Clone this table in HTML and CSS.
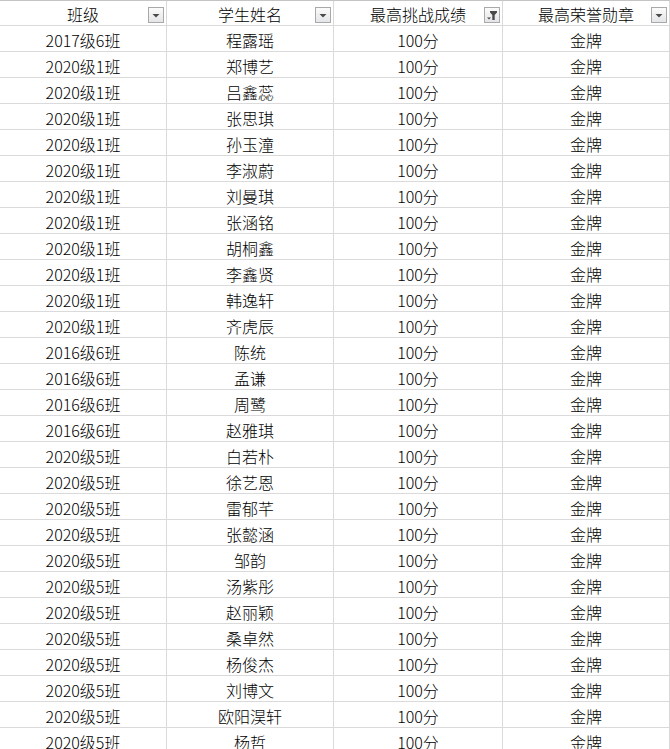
FILE: index.html
```html
<!DOCTYPE html>
<html lang="zh-CN">
<head>
<meta charset="utf-8">
<title>成绩表</title>
<link rel="stylesheet" href="styles.css">
</head>
<body>
<div class="sheet">
  <div class="cell head"><span class="label">班级</span><span class="fbtn"><svg width="14" height="14" viewBox="0 0 14 14"><path d="M3.5 6h7l-3.5 3.5z" fill="#4a4a4a"/></svg></span></div>
  <div class="cell head"><span class="label">学生姓名</span><span class="fbtn"><svg width="14" height="14" viewBox="0 0 14 14"><path d="M3.5 6h7l-3.5 3.5z" fill="#4a4a4a"/></svg></span></div>
  <div class="cell head"><span class="label">最高挑战成绩</span><span class="fbtn"><svg width="14" height="14" viewBox="0 0 14 14"><path d="M5 3h7v1.5l-2.3 2.5v5h-2.4v-5L5 4.5z" fill="#4a4a4a"/><path d="M2 9.5h4l-2 2z" fill="#4a4a4a"/></svg></span></div>
  <div class="cell head"><span class="label">最高荣誉勋章</span><span class="fbtn"><svg width="14" height="14" viewBox="0 0 14 14"><path d="M3.5 6h7l-3.5 3.5z" fill="#4a4a4a"/></svg></span></div>

  <div class="cell">2017级6班</div><div class="cell">程露瑶</div><div class="cell">100分</div><div class="cell">金牌</div>
  <div class="cell">2020级1班</div><div class="cell">郑博艺</div><div class="cell">100分</div><div class="cell">金牌</div>
  <div class="cell">2020级1班</div><div class="cell">吕鑫蕊</div><div class="cell">100分</div><div class="cell">金牌</div>
  <div class="cell">2020级1班</div><div class="cell">张思琪</div><div class="cell">100分</div><div class="cell">金牌</div>
  <div class="cell">2020级1班</div><div class="cell">孙玉潼</div><div class="cell">100分</div><div class="cell">金牌</div>
  <div class="cell">2020级1班</div><div class="cell">李淑蔚</div><div class="cell">100分</div><div class="cell">金牌</div>
  <div class="cell">2020级1班</div><div class="cell">刘曼琪</div><div class="cell">100分</div><div class="cell">金牌</div>
  <div class="cell">2020级1班</div><div class="cell">张涵铭</div><div class="cell">100分</div><div class="cell">金牌</div>
  <div class="cell">2020级1班</div><div class="cell">胡桐鑫</div><div class="cell">100分</div><div class="cell">金牌</div>
  <div class="cell">2020级1班</div><div class="cell">李鑫贤</div><div class="cell">100分</div><div class="cell">金牌</div>
  <div class="cell">2020级1班</div><div class="cell">韩逸轩</div><div class="cell">100分</div><div class="cell">金牌</div>
  <div class="cell">2020级1班</div><div class="cell">齐虎辰</div><div class="cell">100分</div><div class="cell">金牌</div>
  <div class="cell">2016级6班</div><div class="cell">陈统</div><div class="cell">100分</div><div class="cell">金牌</div>
  <div class="cell">2016级6班</div><div class="cell">孟谦</div><div class="cell">100分</div><div class="cell">金牌</div>
  <div class="cell">2016级6班</div><div class="cell">周鹭</div><div class="cell">100分</div><div class="cell">金牌</div>
  <div class="cell">2016级6班</div><div class="cell">赵雅琪</div><div class="cell">100分</div><div class="cell">金牌</div>
  <div class="cell">2020级5班</div><div class="cell">白若朴</div><div class="cell">100分</div><div class="cell">金牌</div>
  <div class="cell">2020级5班</div><div class="cell">徐艺恩</div><div class="cell">100分</div><div class="cell">金牌</div>
  <div class="cell">2020级5班</div><div class="cell">雷郁芊</div><div class="cell">100分</div><div class="cell">金牌</div>
  <div class="cell">2020级5班</div><div class="cell">张懿涵</div><div class="cell">100分</div><div class="cell">金牌</div>
  <div class="cell">2020级5班</div><div class="cell">邹韵</div><div class="cell">100分</div><div class="cell">金牌</div>
  <div class="cell">2020级5班</div><div class="cell">汤紫彤</div><div class="cell">100分</div><div class="cell">金牌</div>
  <div class="cell">2020级5班</div><div class="cell">赵丽颖</div><div class="cell">100分</div><div class="cell">金牌</div>
  <div class="cell">2020级5班</div><div class="cell">桑卓然</div><div class="cell">100分</div><div class="cell">金牌</div>
  <div class="cell">2020级5班</div><div class="cell">杨俊杰</div><div class="cell">100分</div><div class="cell">金牌</div>
  <div class="cell">2020级5班</div><div class="cell">刘博文</div><div class="cell">100分</div><div class="cell">金牌</div>
  <div class="cell">2020级5班</div><div class="cell">欧阳淏轩</div><div class="cell">100分</div><div class="cell">金牌</div>
  <div class="cell">2020级5班</div><div class="cell">杨哲</div><div class="cell">100分</div><div class="cell">金牌</div>
</div>
</body>
</html>
```
FILE: styles.css
```css
html, body {
  margin: 0;
  padding: 0;
  background: #fff;
  overflow: hidden;
}
body {
  font-family: "Noto Sans CJK SC", "Noto Sans", sans-serif;
  color: #000;
}
.sheet {
  display: grid;
  grid-template-columns: 166px 166px 168px 166px;
  grid-auto-rows: 25px;
  grid-template-rows: 24px;
  gap: 1px;
  width: 669px;
  padding: 0 1px 1px 0;
  border-top: 1px solid #c4c4c4;
  background: #dadada;
}
.cell {
  background: #fff;
  display: flex;
  align-items: center;
  justify-content: center;
  font-size: 16px;
  font-weight: 300;
  line-height: 1;
  padding-top: 3px;
  box-sizing: border-box;
  white-space: nowrap;
}
.head {
  position: relative;
  font-size: 16px;
  padding-top: 1px;
}
.fbtn {
  position: absolute;
  right: 2px;
  top: 6px;
  width: 16px;
  height: 16px;
  box-sizing: border-box;
  border: 1px solid #a9a9a9;
  background: linear-gradient(#fbfbfb, #e4e5e8);
  display: flex;
  align-items: center;
  justify-content: center;
}
.fbtn svg {
  display: block;
}
```
